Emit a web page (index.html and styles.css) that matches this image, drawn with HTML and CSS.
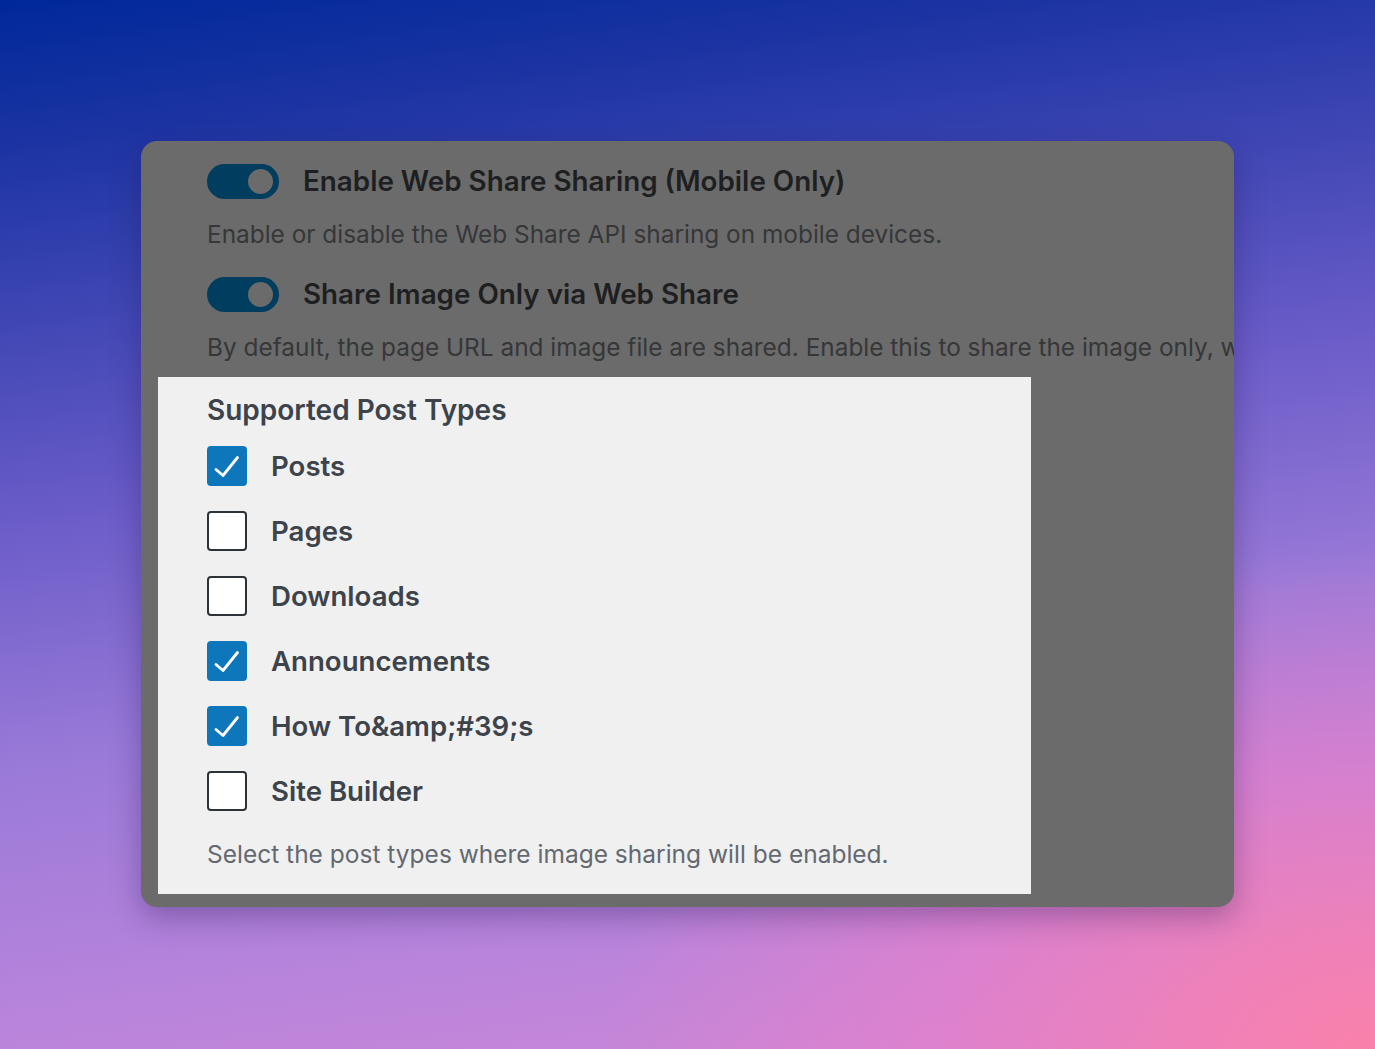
FILE: index.html
```html
<!DOCTYPE html>
<html>
<head>
<meta charset="utf-8">
<link rel="stylesheet" href="styles.css">
</head>
<body>
<div class="stage">
  <div class="card">
    <div class="setting">
      <div class="setting-head">
        <span class="toggle"><span class="knob"></span></span>
        <span class="setting-title">Enable Web Share Sharing (Mobile Only)</span>
      </div>
      <p class="setting-desc">Enable or disable the Web Share API sharing on mobile devices.</p>
    </div>
    <div class="setting">
      <div class="setting-head">
        <span class="toggle"><span class="knob"></span></span>
        <span class="setting-title">Share Image Only via Web Share</span>
      </div>
      <p class="setting-desc nowrap">By default, the page URL and image file are shared. Enable this to share the image only, without the page URL.</p>
    </div>
    <div class="panel">
      <h3 class="panel-title">Supported Post Types</h3>
      <ul class="checks">
        <li class="check"><span class="box on"><svg viewBox="0 0 40 40"><path d="M9 23.5 L16 29.5 L30.5 11.5" fill="none" stroke="#fff" stroke-width="2.8" stroke-linecap="round" stroke-linejoin="round"/></svg></span><span class="label">Posts</span></li>
        <li class="check"><span class="box"></span><span class="label">Pages</span></li>
        <li class="check"><span class="box"></span><span class="label">Downloads</span></li>
        <li class="check"><span class="box on"><svg viewBox="0 0 40 40"><path d="M9 23.5 L16 29.5 L30.5 11.5" fill="none" stroke="#fff" stroke-width="2.8" stroke-linecap="round" stroke-linejoin="round"/></svg></span><span class="label">Announcements</span></li>
        <li class="check"><span class="box on"><svg viewBox="0 0 40 40"><path d="M9 23.5 L16 29.5 L30.5 11.5" fill="none" stroke="#fff" stroke-width="2.8" stroke-linecap="round" stroke-linejoin="round"/></svg></span><span class="label">How To&amp;amp;#39;s</span></li>
        <li class="check"><span class="box"></span><span class="label">Site Builder</span></li>
      </ul>
      <p class="panel-desc">Select the post types where image sharing will be enabled.</p>
    </div>
  </div>
</div>
</body>
</html>
```
FILE: styles.css
```css
html, body {
  margin: 0;
  padding: 0;
}
body {
  width: 1375px;
  height: 1049px;
  overflow: hidden;
  font-family: Inter, "Open Sans", "Liberation Sans", sans-serif;
  background:
    radial-gradient(ellipse 70% 60% at 100% 100%, rgba(252,128,168,0.95) 0%, rgba(236,126,200,0.6) 45%, rgba(236,126,200,0) 80%),
    linear-gradient(172deg, #00289a 0%, #1c34a2 12%, #3a44b2 24%, #6a5cc8 42%, #9a7ad8 62%, #b884dc 82%, #d088d4 100%);
}
.stage {
  padding: 141px 0 0 141px;
}
.card {
  width: 1093px;
  height: 766px;
  box-sizing: border-box;
  background: #6b6b6b;
  border-radius: 16px;
  overflow: hidden;
  box-shadow: 0 10px 30px rgba(40, 20, 80, 0.35);
  padding-top: 22px;
}
.setting {
  padding-left: 66px;
}
.setting + .setting {
  margin-top: 25px;
}
.setting-head {
  display: flex;
  align-items: center;
  height: 36px;
}
.toggle {
  width: 72px;
  height: 35px;
  border-radius: 18px;
  background: #013d5f;
  position: relative;
  flex: none;
}
.knob {
  position: absolute;
  right: 6px;
  top: 5px;
  width: 25px;
  height: 25px;
  border-radius: 50%;
  background: #6b6b6b;
}
.setting-title {
  margin-left: 24px;
  font-size: 27.8px;
  font-weight: 600;
  color: #1e1f21;
}
.setting-desc {
  margin: 18px 0 0 0;
  font-size: 24.4px;
  color: #363738;
  line-height: 34px;
}
.nowrap {
  white-space: nowrap;
}
.panel {
  margin: 13px 0 0 17px;
  width: 873px;
  height: 517px;
  background: #f0f0f1;
  box-sizing: border-box;
  padding: 16px 0 0 49px;
}
.panel-title {
  margin: 0;
  font-size: 28px;
  font-weight: 600;
  color: #3c434a;
  line-height: 34px;
}
.checks {
  list-style: none;
  margin: 6px 0 0 0;
  padding: 0;
}
.check {
  display: flex;
  align-items: center;
  height: 65px;
}
.box {
  width: 40px;
  height: 40px;
  box-sizing: border-box;
  border: 2px solid #2c3338;
  border-radius: 4px;
  background: #fff;
  flex: none;
  display: flex;
}
.box.on {
  background: #0e76ba;
  border: none;
}
.box svg {
  width: 40px;
  height: 40px;
}
.label {
  margin-left: 24px;
  font-size: 27.6px;
  font-weight: 600;
  color: #3c434a;
}
.panel-desc {
  margin: 14px 0 0 0;
  font-size: 24.5px;
  color: #646970;
  line-height: 34px;
}
```
